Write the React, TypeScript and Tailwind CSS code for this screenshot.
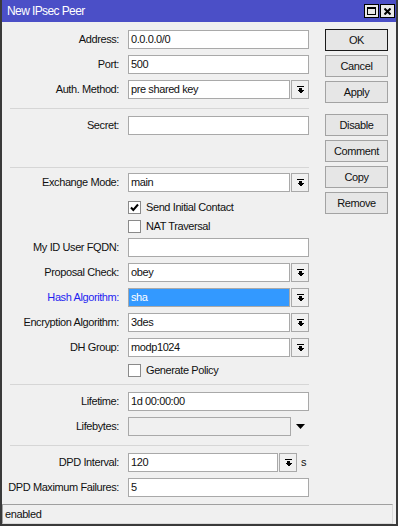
import React from "react";

function DropIcon() {
  return (
    <svg width="7" height="8" viewBox="0 0 7 8" shapeRendering="crispEdges">
      <path d="M0 0h7v1H0z M2 2h3v2h2L3.5 7.5 0 4h2z" fill="#000" />
    </svg>
  );
}

function DropBtn() {
  return (
    <div className="w-[18px] h-[19px] ml-[1px] border border-[#a9a9a9] bg-[#f0f0f0] flex items-center justify-center">
      <DropIcon />
    </div>
  );
}

function Label({ children, blue }: { children: React.ReactNode; blue?: boolean }) {
  return (
    <div
      className={
        blue
          ? "w-[118px] pr-[1px] text-right whitespace-nowrap text-[#1f1ff0]"
          : "w-[118px] pr-[1px] text-right whitespace-nowrap text-[#111]"
      }
    >
      {children}
    </div>
  );
}

function Input({ value, w, sel, disabled }: { value?: string; w: string; sel?: boolean; disabled?: boolean }) {
  return (
    <div
      className={
        "h-[19px] border border-[#a9a9a9] flex items-center px-[2px] whitespace-nowrap overflow-hidden " +
        w +
        (sel ? " bg-[#3399ff] text-white" : disabled ? " bg-[#f0f0f0] text-[#111]" : " bg-white text-[#111]")
      }
    >
      {value}
    </div>
  );
}

function Row({ label, blue, mt, children }: { label: string; blue?: boolean; mt: string; children: React.ReactNode }) {
  return (
    <div className={"flex items-center h-[19px] " + mt}>
      <Label blue={blue}>{label}</Label>
      <div className="ml-[8px] flex items-center">{children}</div>
    </div>
  );
}

function Check({ checked, label, mt }: { checked?: boolean; label: string; mt: string }) {
  return (
    <div className={"flex items-center h-[19px] pl-[126px] " + mt}>
      <div className="w-[13px] h-[13px] border border-[#8a8a8a] bg-white flex items-center justify-center">
        {checked && (
          <svg width="9" height="9" viewBox="0 0 9 9">
            <path d="M1 4.5 L3.3 7 L8 1.5" stroke="#000" strokeWidth="2" fill="none" />
          </svg>
        )}
      </div>
      <span className="ml-[5px] text-[#111]">{label}</span>
    </div>
  );
}

function Sep({ mt }: { mt: string }) {
  return <div className={"ml-[8px] w-[299px] h-px bg-[#d6d6d6] " + mt} />;
}

function Btn({ children, def, mt }: { children: React.ReactNode; def?: boolean; mt: string }) {
  return (
    <div
      className={
        "w-[63px] h-[22px] flex items-center justify-center bg-[#e6e6e6] text-[#111] border " +
        (def ? "border-[#1a1a1a] " : "border-[#a3a3a3] ") +
        mt
      }
    >
      {children}
    </div>
  );
}

export default function App() {
  return (
    <div className="w-[398px] h-[526px] bg-[#f0f0f0] border-l-2 border-r-2 border-b-2 border-[#3a3a3a] text-[11px] tracking-[-0.4px] leading-none font-['Liberation_Sans',Arial,sans-serif] flex flex-col overflow-hidden">
      <div className="h-[22px] bg-[#4b4fc7] flex items-center justify-between pl-[5px] pr-[1px]">
        <span className="text-white text-[12px] tracking-[-0.6px]">New IPsec Peer</span>
        <div className="flex items-center gap-[1px]">
          <div className="w-[15px] h-[14px] bg-[#e8e8e8] border border-black flex items-center justify-center">
            <div className="w-[9px] h-[8px] border border-black border-t-2" />
          </div>
          <div className="w-[15px] h-[14px] bg-[#e8e8e8] border border-black flex items-center justify-center">
            <svg width="7" height="7" viewBox="0 0 7 7">
              <path d="M0.5 0.5 L6.5 6.5 M6.5 0.5 L0.5 6.5" stroke="#000" strokeWidth="2" />
            </svg>
          </div>
        </div>
      </div>
      <div className="flex">
        <div className="w-[307px] flex flex-col">
          <Row label="Address:" mt="mt-[8px]">
            <Input w="w-[181px]" value="0.0.0.0/0" />
          </Row>
          <Row label="Port:" mt="mt-[6px]">
            <Input w="w-[181px]" value="500" />
          </Row>
          <Row label="Auth. Method:" mt="mt-[6px]">
            <Input w="w-[162px]" value="pre shared key" />
            <DropBtn />
          </Row>
          <Sep mt="mt-[9px]" />
          <Row label="Secret:" mt="mt-[7px]">
            <Input w="w-[181px]" />
          </Row>
          <Sep mt="mt-[32px]" />
          <Row label="Exchange Mode:" mt="mt-[5px]">
            <Input w="w-[162px]" value="main" />
            <DropBtn />
          </Row>
          <Check checked label="Send Initial Contact" mt="mt-[6px]" />
          <Check label="NAT Traversal" mt="mt-0" />
          <Row label="My ID User FQDN:" mt="mt-[2px]">
            <Input w="w-[181px]" />
          </Row>
          <Row label="Proposal Check:" mt="mt-[6px]">
            <Input w="w-[162px]" value="obey" />
            <DropBtn />
          </Row>
          <Row label="Hash Algorithm:" blue mt="mt-[6px]">
            <Input w="w-[162px]" value="sha" sel />
            <DropBtn />
          </Row>
          <Row label="Encryption Algorithm:" mt="mt-[6px]">
            <Input w="w-[162px]" value="3des" />
            <DropBtn />
          </Row>
          <Row label="DH Group:" mt="mt-[6px]">
            <Input w="w-[162px]" value="modp1024" />
            <DropBtn />
          </Row>
          <Check label="Generate Policy" mt="mt-[4px]" />
          <Sep mt="mt-[4px]" />
          <Row label="Lifetime:" mt="mt-[7px]">
            <Input w="w-[181px]" value="1d 00:00:00" />
          </Row>
          <Row label="Lifebytes:" mt="mt-[6px]">
            <Input w="w-[163px]" disabled />
            <svg className="ml-[5px]" width="9" height="5" viewBox="0 0 9 5">
              <polygon points="0,0 9,0 4.5,5" fill="#000" />
            </svg>
          </Row>
          <Sep mt="mt-[9px]" />
          <Row label="DPD Interval:" mt="mt-[7px]">
            <Input w="w-[150px]" value="120" />
            <DropBtn />
            <span className="ml-[4px] text-[#111]">s</span>
          </Row>
          <Row label="DPD Maximum Failures:" mt="mt-[6px]">
            <Input w="w-[181px]" value="5" />
          </Row>
        </div>
        <div className="ml-[16px] flex flex-col">
          <Btn def mt="mt-[7px]">OK</Btn>
          <Btn mt="mt-[4px]">Cancel</Btn>
          <Btn mt="mt-[4px]">Apply</Btn>
          <Btn mt="mt-[11px]">Disable</Btn>
          <Btn mt="mt-[4px]">Comment</Btn>
          <Btn mt="mt-[4px]">Copy</Btn>
          <Btn mt="mt-[4px]">Remove</Btn>
        </div>
      </div>
      <div className="mt-[7px] w-[391px] h-[20px] border border-[#a0a0a0] border-r-[#dadada] border-b-[#dadada] flex items-center pl-[2px] text-[#111]">
        enabled
      </div>
    </div>
  );
}
